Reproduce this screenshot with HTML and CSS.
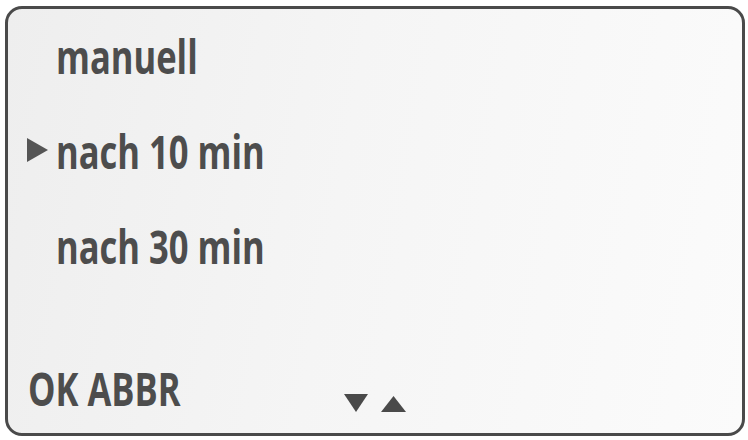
FILE: index.html
```html
<!DOCTYPE html>
<html lang="de">
<head>
<meta charset="utf-8">
<title>Menü</title>
<link rel="stylesheet" href="styles.css">
</head>
<body>
<div class="panel">
  <ul class="menu">
    <li class="item"><span class="marker"></span><span class="label">manuell</span></li>
    <li class="item selected"><span class="marker"><svg viewBox="0 0 21 24" width="21" height="24"><polygon points="0,0 21,12 0,24" /></svg></span><span class="label">nach 10 min</span></li>
    <li class="item"><span class="marker"></span><span class="label">nach 30 min</span></li>
  </ul>
  <div class="footer">
    <span class="label softkeys">OK ABBR</span>
    <span class="arrows">
      <svg class="arrow" viewBox="0 0 24 18" width="24" height="18"><polygon points="0,0 24,0 12,18" /></svg>
      <svg class="arrow" viewBox="0 0 25 16" width="25" height="16"><polygon points="12.5,0 25,16 0,16" /></svg>
    </span>
  </div>
</div>
</body>
</html>
```
FILE: styles.css
```css
html, body {
  margin: 0;
  padding: 0;
  background: #ffffff;
}
body {
  width: 748px;
  height: 440px;
  overflow: hidden;
  font-family: "Open Sans", "DejaVu Sans Condensed", sans-serif;
  font-weight: 700;
  color: #4d4d4d;
}
.panel {
  box-sizing: border-box;
  margin: 6px 3px 0 5px;
  width: 740px;
  height: 430px;
  border: 3px solid #4a4a4a;
  border-radius: 17px;
  background: linear-gradient(100deg, #eeeeee 0%, #f5f5f5 45%, #fbfbfb 100%);
  display: flex;
  flex-direction: column;
}
.menu {
  list-style: none;
  margin: 0;
  padding: 0;
}
.item {
  display: flex;
  align-items: center;
  padding-left: 19px;
  height: 95px;
  font-size: 47px;
  line-height: 95px;
}
.marker {
  width: 21px;
  height: 24px;
  margin-right: 8px;
  margin-top: -4px;
  flex: none;
  display: flex;
}
.marker svg {
  fill: #555555;
}
.label {
  display: inline-block;
  white-space: nowrap;
  transform: scaleX(0.735);
  transform-origin: 0 50%;
}
.footer {
  margin-top: auto;
  padding: 0 0 20px 20px;
  display: grid;
  grid-template-columns: 316px auto;
  align-items: end;
  font-size: 47px;
  line-height: 50px;
}
.arrows {
  display: flex;
  align-items: flex-end;
  gap: 13px;
  margin-bottom: 1px;
}
.arrow {
  fill: #4a4a4a;
  display: block;
}
```
